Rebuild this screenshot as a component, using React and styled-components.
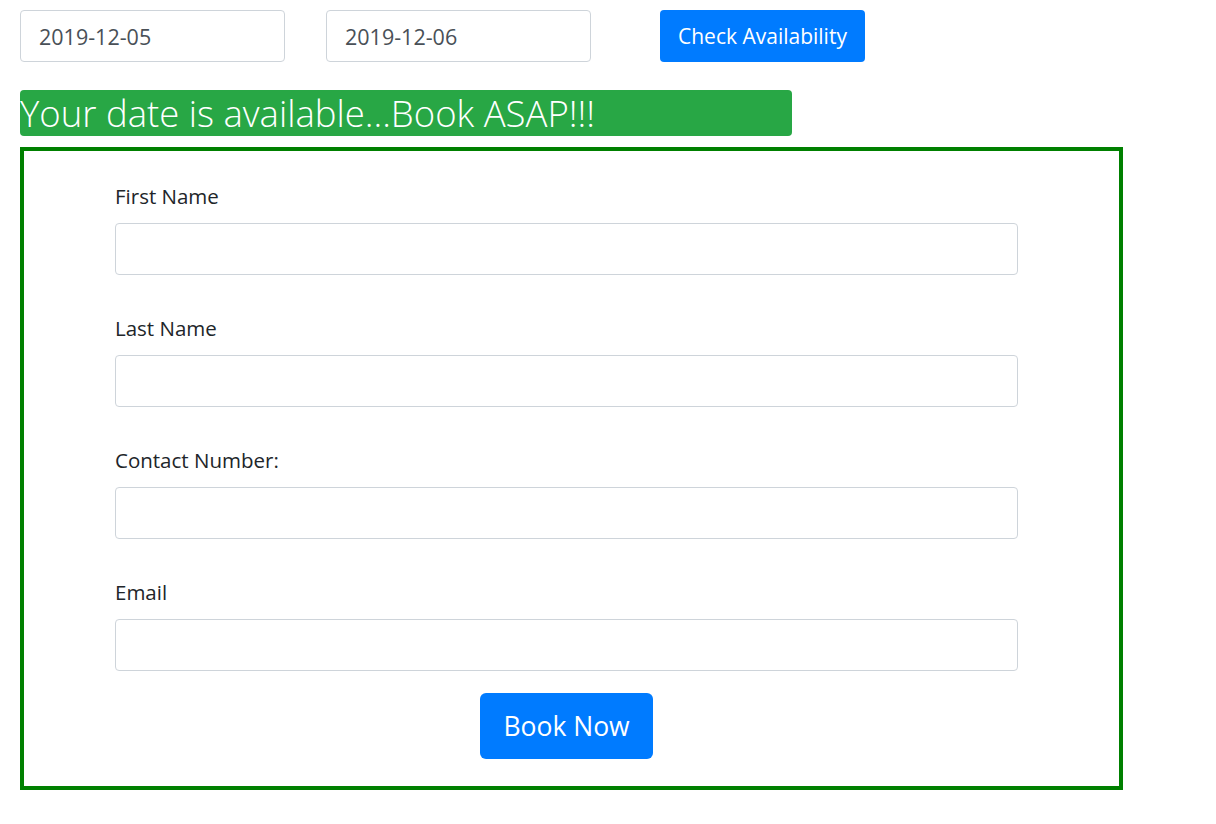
import React, { useState } from "react";
import styled, { createGlobalStyle } from "styled-components";

const GlobalStyle = createGlobalStyle`
  body {
    margin: 0;
    background: #fff;
    font-family: "Open Sans", "Noto Sans", sans-serif;
    color: #212529;
  }
`;

const Page = styled.div`
  padding: 10px 20px 20px;
`;

const SearchBar = styled.div`
  display: flex;
  align-items: center;
  gap: 41px;
`;

const DateInput = styled.input`
  box-sizing: border-box;
  width: 265px;
  height: 52px;
  padding: 0 18px;
  border: 1px solid #ced4da;
  border-radius: 4px;
  font-family: inherit;
  font-size: 21.5px;
  color: #495057;
  outline: none;
`;

const Button = styled.button`
  box-sizing: border-box;
  height: ${(p) => (p.$large ? "66px" : "52px")};
  padding: 0 ${(p) => (p.$large ? "23px" : "18px")};
  margin-left: ${(p) => (p.$large ? "0" : "28px")};
  border: none;
  border-radius: ${(p) => (p.$large ? "6px" : "4px")};
  background: #007bff;
  color: #fff;
  font-family: inherit;
  font-size: ${(p) => (p.$large ? "26.5px" : "21px")};
  cursor: pointer;
`;

const Alert = styled.div`
  box-sizing: border-box;
  width: 772px;
  height: 46px;
  margin-top: 28px;
  background: #28a745;
  border-radius: 4px;
  color: #fff;
  font-weight: 300;
  font-size: 36.5px;
  line-height: 46px;
  white-space: nowrap;
`;

const FormBox = styled.form`
  box-sizing: border-box;
  width: 1103px;
  margin-top: 11px;
  border: 4px solid #008000;
  padding: 30px 0 27px 91px;
  display: flex;
  flex-direction: column;
  gap: 38px;
`;

const Field = styled.div`
  width: 903px;
`;

const Label = styled.label`
  display: block;
  font-size: 20.5px;
  line-height: 30px;
  margin-bottom: 12px;
`;

const TextInput = styled.input`
  box-sizing: border-box;
  display: block;
  width: 100%;
  height: 52px;
  border: 1px solid #ced4da;
  border-radius: 4px;
  padding: 0 16px;
  font-family: inherit;
  font-size: 20px;
  outline: none;
`;

const Actions = styled.div`
  width: 903px;
  margin-top: -16px;
  display: flex;
  justify-content: center;
`;

const fields = [
  { name: "firstName", label: "First Name" },
  { name: "lastName", label: "Last Name" },
  { name: "contact", label: "Contact Number:" },
  { name: "email", label: "Email" },
];

const App = () => {
  const [from, setFrom] = useState("2019-12-05");
  const [to, setTo] = useState("2019-12-06");

  return (
    <Page>
      <GlobalStyle />
      <SearchBar>
        <DateInput value={from} onChange={(e) => setFrom(e.target.value)} />
        <DateInput value={to} onChange={(e) => setTo(e.target.value)} />
        <Button type="button">Check Availability</Button>
      </SearchBar>
      <Alert>Your date is available...Book ASAP!!!</Alert>
      <FormBox onSubmit={(e) => e.preventDefault()}>
        {fields.map((f) => (
          <Field key={f.name}>
            <Label htmlFor={f.name}>{f.label}</Label>
            <TextInput id={f.name} name={f.name} />
          </Field>
        ))}
        <Actions>
          <Button $large type="submit">
            Book Now
          </Button>
        </Actions>
      </FormBox>
    </Page>
  );
};

export default App;
